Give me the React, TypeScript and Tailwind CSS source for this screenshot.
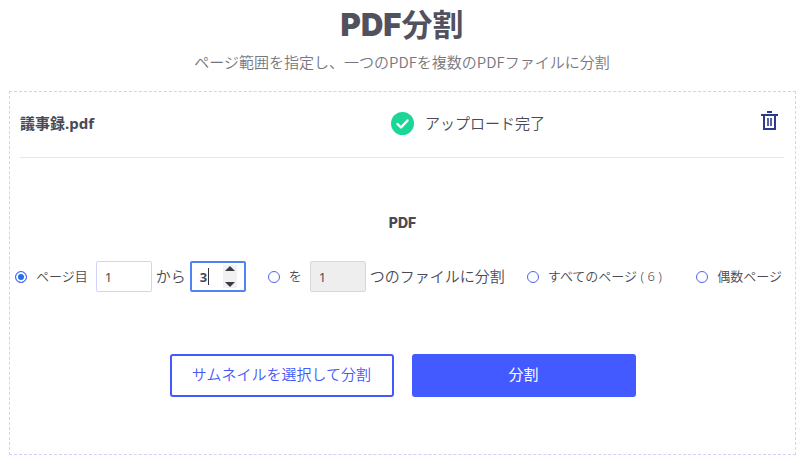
import { useState } from "react";

const radioClass = "size-3 shrink-0 appearance-none rounded-full border border-[#4d63f7] bg-white checked:bg-[#1a73f0] checked:shadow-[inset_0_0_0_2px_#ffffff]";
const fieldClass = "h-[31px] w-14 rounded-[2px] px-2 text-[13px] outline-none [appearance:textfield] [&::-webkit-inner-spin-button]:appearance-none";

function FileRow({ name, onDelete }: { name: string; onDelete: () => void }) {
    return (
        <div className="grid grid-cols-[371px_1fr_auto] items-center border-b border-[#e4e6f8] pt-[15px] pb-[18px]">
            <span className="text-[15px] leading-8 font-bold">{name}</span>
            <div className="flex items-center gap-[11px]">
                <svg className="size-[23px]" viewBox="0 0 23 23" fill="none">
                    <circle cx="11.5" cy="11.5" r="11.5" fill="#1bd696" />
                    <path d="M6.5 12l3.500 3.500 6.500-7" stroke="#fff" strokeWidth="2.4" strokeLinecap="round" strokeLinejoin="round" />
                </svg>
                <span className="text-[15px] font-[350]">アップロード完了</span>
            </div>
            <button onClick={onDelete} aria-label="削除" className="mr-[6px] mb-[6px]">
                <svg className="block h-[19px] w-[17px]" viewBox="0 0 17 19" fill="none" stroke="#2c3a92" strokeWidth="2">
                    <path d="M6 1h5M0 4h17M3 4v14h11V4" />
                    <path d="M7 7v8M10 7v8" strokeWidth="1.6" />
                </svg>
            </button>
        </div>
    )
}

export default function App() {
    const [mode, setMode] = useState("range")
    const [from, setFrom] = useState(1)
    const [to, setTo] = useState(3)
    const [parts, setParts] = useState(1)
    const [file, setFile] = useState<string | null>("議事録.pdf")

    return (
        <main className="min-w-[780px] bg-white pt-[3px] font-['Noto_Sans','Noto_Sans_CJK_JP',sans-serif] text-[#4a4a55]">
            <h1 className="ml-1 text-center text-[31px] leading-[43px] font-bold text-[#52525e]">
                <span className="font-[Inter] font-black">PDF</span>分割
            </h1>
            <p className="mt-1 ml-1 text-center font-['Noto_Sans_CJK_JP',sans-serif] text-[15px] leading-6 font-[350] text-[#777780]">ページ範囲を指定し、一つのPDFを複数のPDFファイルに分割</p>

            <section className="mt-[17px] mr-1 ml-[9px] border border-dashed border-[#cdd2fb] pb-[57px]">
                <div className="mr-[11px] ml-[10px]">
                    {file && <FileRow name={file} onDelete={() => setFile(null)} />}
                </div>

                <h2 className="mt-[55px] text-center font-[Inter] text-sm leading-5 font-extrabold">PDF</h2>

                <div className="mt-7 mr-[13px] ml-[5px] flex items-center gap-[22px] text-[15px] font-[350] whitespace-nowrap">
                    <div className="flex items-center gap-1">
                        <label className="mr-1 flex items-center gap-[9px] text-[13px]">
                            <input type="radio" name="mode" className={radioClass} checked={mode === "range"} onChange={() => setMode("range")} />
                            ページ目
                        </label>
                        <input type="number" aria-label="開始ページ" className={`${fieldClass} border border-[#cfd4fb] font-normal`} value={from} onChange={(e) => setFrom(Number(e.target.value))} />
                        <span>から</span>
                        <div className="relative">
                            <input type="number" aria-label="終了ページ" className={`${fieldClass} block border-2 border-[#4f83f3] font-bold`} value={to} onChange={(e) => setTo(Number(e.target.value))} />
                            <span className="absolute top-[7px] left-[18px] h-[17px] w-px bg-[#33333d]" />
                            <div className="absolute top-1 right-[9px] flex h-[23px] w-[14px] flex-col items-center justify-between bg-[#f1f1f3]">
                                <button aria-label="増やす" onClick={() => setTo(to + 1)}>
                                    <svg className="mt-px block h-[5px] w-[10px]" viewBox="0 0 10 5"><path d="M0 5L5 0l5 5z" fill="#3b3b48" /></svg>
                                </button>
                                <button aria-label="減らす" onClick={() => setTo(Math.max(1, to - 1))}>
                                    <svg className="mb-px block h-[5px] w-[10px]" viewBox="0 0 10 5"><path d="M0 0l5 5 5-5z" fill="#3b3b48" /></svg>
                                </button>
                            </div>
                        </div>
                    </div>
                    <div className="flex items-center gap-1">
                        <label className="mr-1 flex items-center gap-[9px] text-[13px]">
                            <input type="radio" name="mode" className={radioClass} checked={mode === "parts"} onChange={() => setMode("parts")} />
                            を
                        </label>
                        <input type="number" aria-label="ファイル数" disabled={mode !== "parts"} className={`${fieldClass} border border-[#d8d8dc] font-normal disabled:bg-[#eeeeee]`} value={parts} onChange={(e) => setParts(Number(e.target.value))} />
                        <span>つのファイルに分割</span>
                    </div>
                    <label className="flex items-center gap-[9px] text-[13px]">
                        <input type="radio" name="mode" className={radioClass} checked={mode === "all"} onChange={() => setMode("all")} />
                        すべてのページ ( 6 )
                    </label>
                    <label className="ml-auto flex items-center gap-[9px] text-[13px]">
                        <input type="radio" name="mode" className={radioClass} checked={mode === "even"} onChange={() => setMode("even")} />
                        偶数ページ
                    </label>
                </div>

                <div className="mt-[62px] flex justify-center gap-[18px] text-[15px] leading-5">
                    <button className="h-[43px] w-56 rounded-[3px] border-2 border-[#4259fb] pb-1 font-[350] text-[#4259fb]">サムネイルを選択して分割</button>
                    <button className="h-[43px] w-56 rounded-[3px] bg-[#425aff] pb-1 text-white">分割</button>
                </div>
            </section>
        </main>
    )
}
